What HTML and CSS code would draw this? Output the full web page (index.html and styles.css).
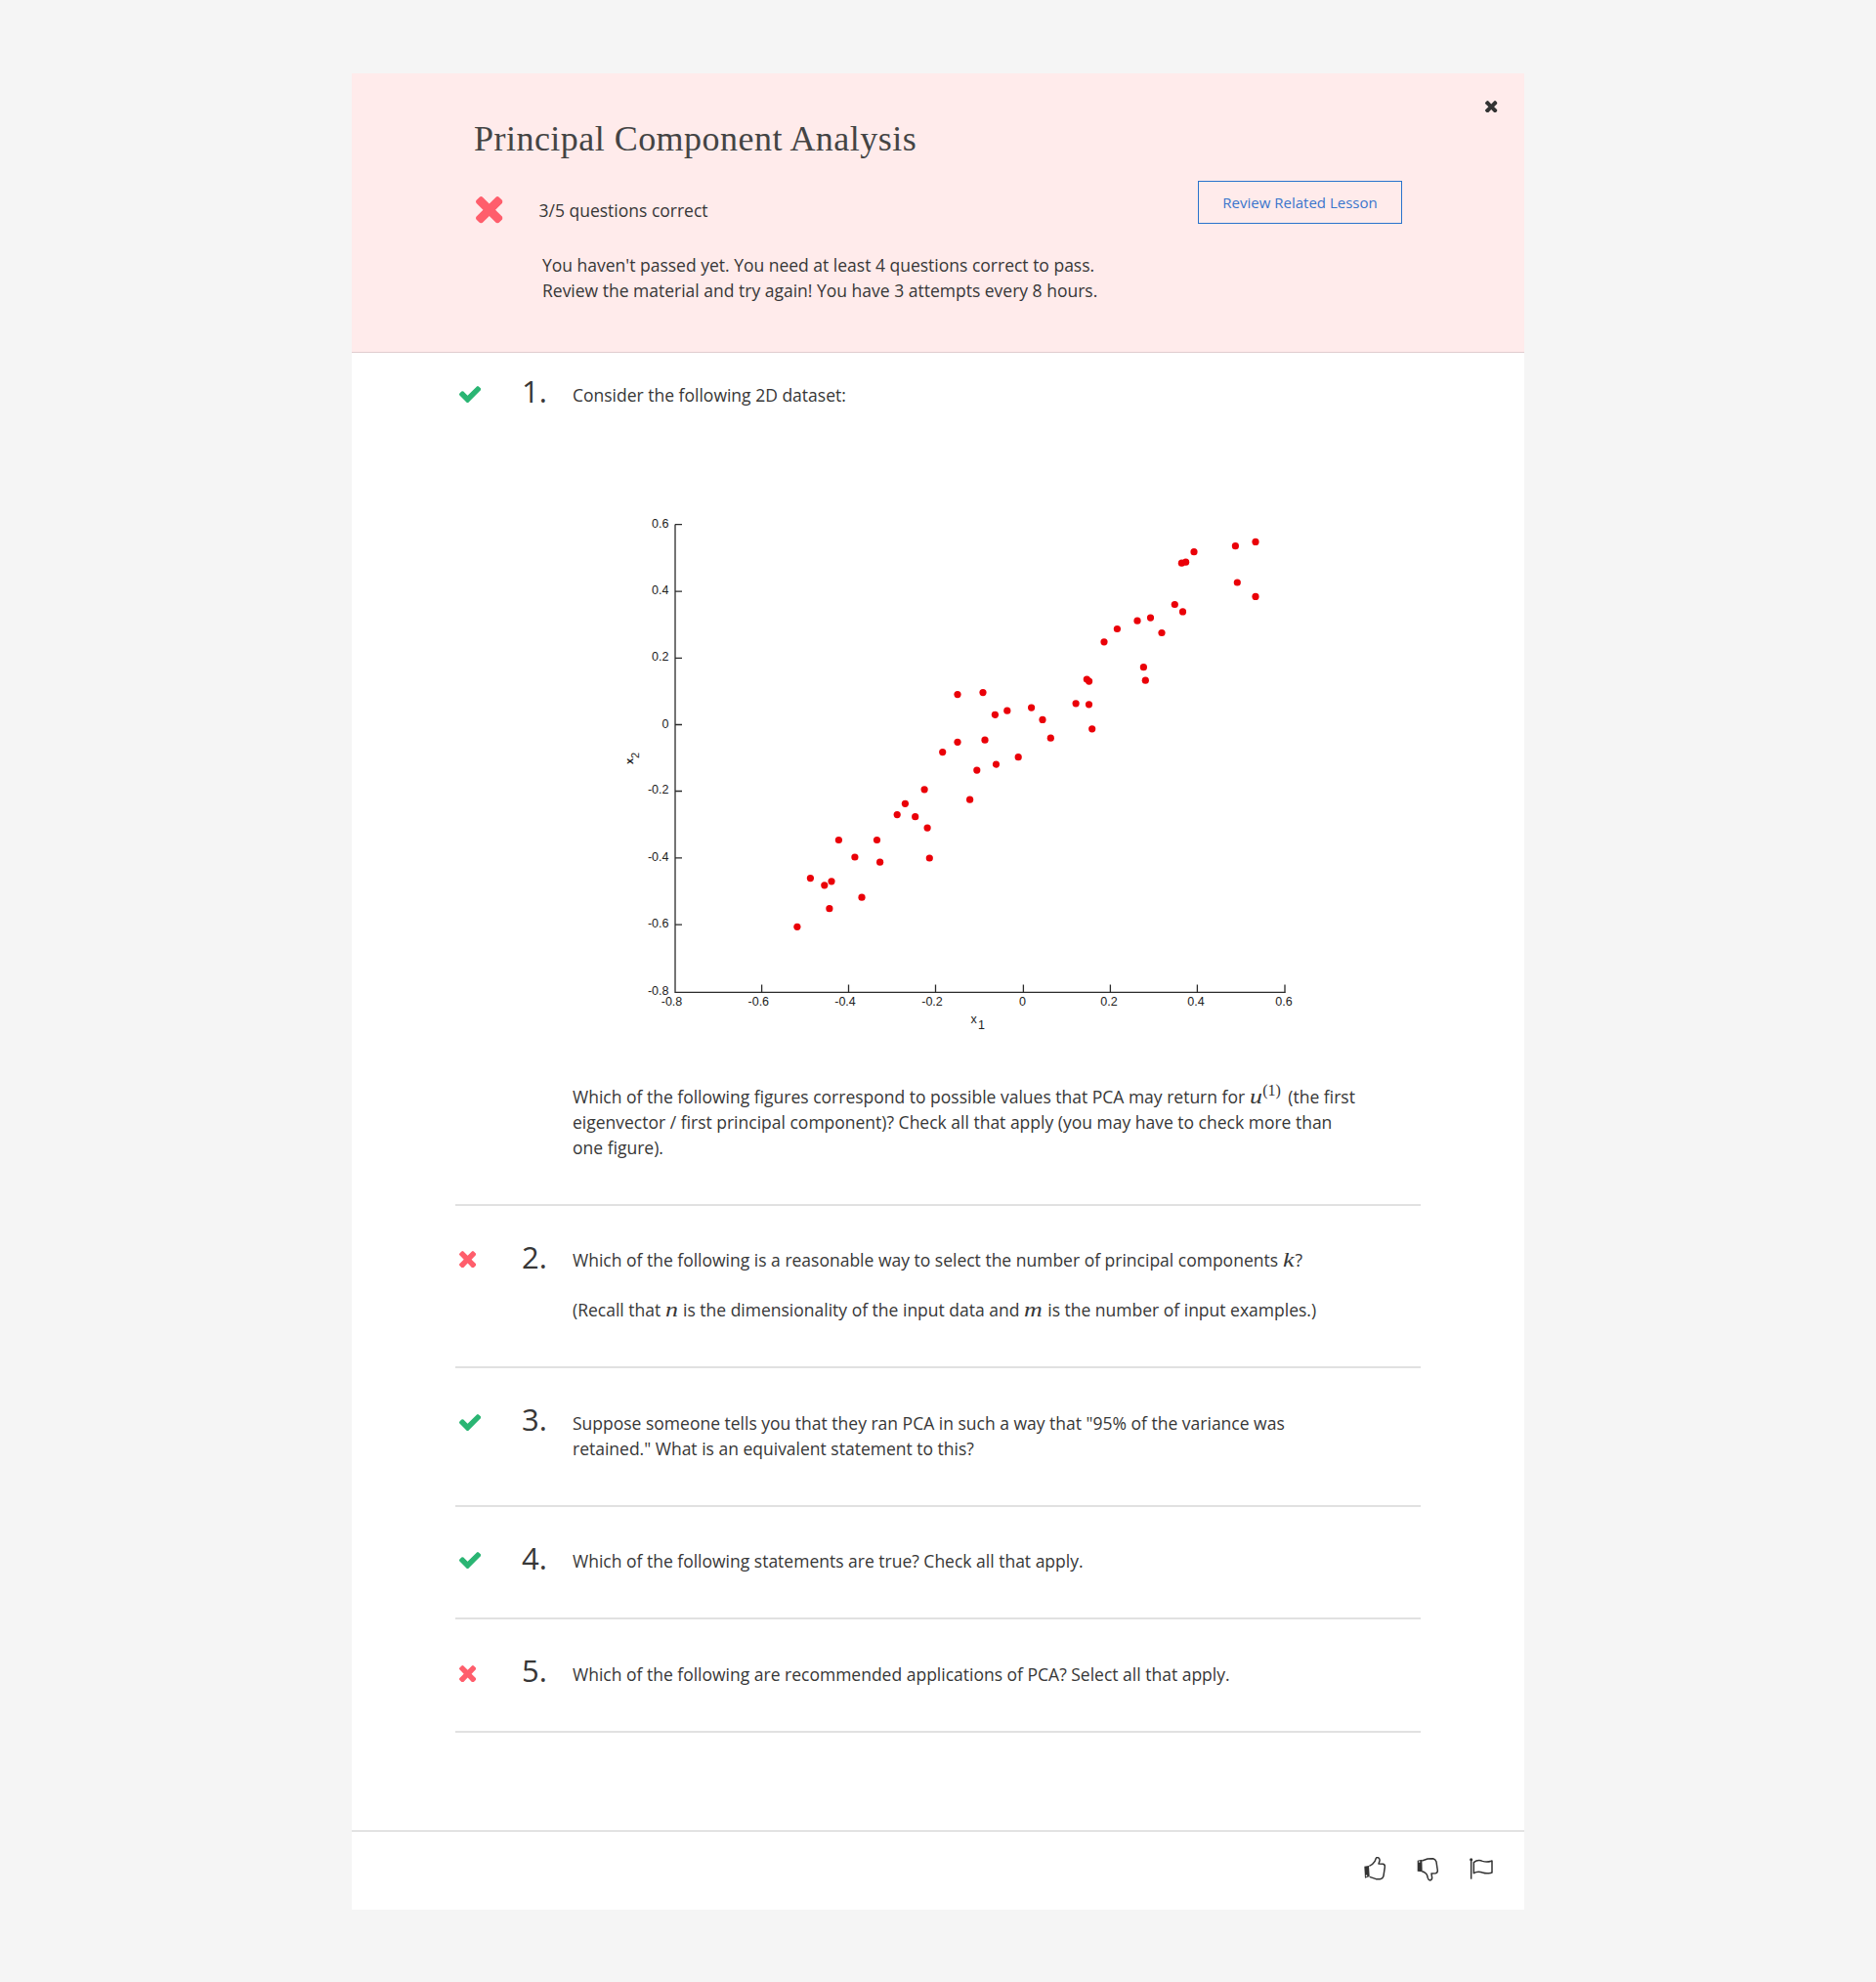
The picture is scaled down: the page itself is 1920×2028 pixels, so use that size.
FILE: index.html
```html
<!DOCTYPE html>
<html lang="en">
<head>
<meta charset="utf-8">
<title>Principal Component Analysis</title>
<link rel="stylesheet" href="styles.css">
</head>
<body>
<svg class="defs" width="0" height="0" aria-hidden="true">
  <symbol id="check" viewBox="121 334 1550 1188"><path d="M1671 566q0 40-28 68l-724 724-136 136q-28 28-68 28t-68-28l-136-136-362-362q-28-28-28-68t28-68l136-136q28-28 68-28t68 28l294 295 656-657q28-28 68-28t68 28l136 136q28 28 28 68z"/></symbol>
  <symbol id="times" viewBox="302 366 1188 1188"><path d="M1490 1322q0 40-28 68l-136 136q-28 28-68 28t-68-28l-294-294-294 294q-28 28-68 28t-68-28l-136-136q-28-28-28-68t28-68l294-294-294-294q-28-28-28-68t28-68l136-136q28-28 68-28t68 28l294 294 294-294q28-28 68-28t68 28l136 136q28 28 28 68t-28 68l-294 294 294 294q28 28 28 68z"/></symbol>
</svg>
<main class="card">
  <header class="result">
    <div class="summary">
      <h1 class="title">Principal Component Analysis</h1>
      <div class="score">
        <svg class="score-icon"><use href="#times"/></svg>
        <span>3/5 questions correct</span>
      </div>
      <p class="message">You haven't passed yet. You need at least 4 questions correct to pass.<br>Review the material and try again! You have 3 attempts every 8 hours.</p>
    </div>
    <a class="review">Review Related Lesson</a>
    <svg class="close"><use href="#times"/></svg>
  </header>

  <ol class="questions">
    <li class="question">
      <div class="mark"><svg class="check"><use href="#check"/></svg></div>
      <div class="number">1.</div>
      <div class="body">
        <p>Consider the following 2D dataset:</p>
        <svg class="plot" viewBox="586 417 804 692">
          <g class="axes">
            <path d="M691 536.5V1015.3H1315.3"/>
            <path d="M691 536.7h7M691 605.2h7M691 673.3h7M691 741.5h7M691 809.5h7M691 877.8h7M691 946.2h7"/>
            <path d="M779.6 1015v-7.5M868.5 1015v-7.5M957.5 1015v-7.5M1047.4 1015v-7.5M1136.4 1015v-7.5M1225.4 1015v-7.5M1315 1015.9v-8.4"/>
          </g>
          <g class="ticks ticks-y">
            <text x="684.5" y="539.8">0.6</text><text x="684.5" y="608">0.4</text><text x="684.5" y="676.3">0.2</text><text x="684.5" y="744.5">0</text>
            <text x="684.5" y="812.3">-0.2</text><text x="684.5" y="880.7">-0.4</text><text x="684.5" y="949">-0.6</text><text x="684.5" y="1018">-0.8</text>
          </g>
          <g class="ticks ticks-x">
            <text x="687.5" y="1029.3">-0.8</text><text x="776.3" y="1029.3">-0.6</text><text x="865" y="1029.3">-0.4</text><text x="954" y="1029.3">-0.2</text>
            <text x="1046.5" y="1029.3">0</text><text x="1135" y="1029.3">0.2</text><text x="1224" y="1029.3">0.4</text><text x="1314" y="1029.3">0.6</text>
          </g>
          <g class="ticks">
            <text x="993.5" y="1047">x</text><text x="1001" y="1053">1</text>
            <g transform="translate(647.5 782) rotate(-90)"><text class="axis-name" x="0" y="0">x</text><text class="axis-index" x="6" y="6">2</text></g>
          </g>
          <g class="points">
            <circle cx="980" cy="710.6" r="3.6"/><circle cx="980" cy="759.3" r="3.6"/><circle cx="964.7" cy="769.6" r="3.6"/>
            <circle cx="1264.4" cy="558.7" r="3.6"/><circle cx="1285" cy="554.4" r="3.6"/><circle cx="1222" cy="564.7" r="3.6"/>
            <circle cx="1209.4" cy="576.2" r="3.6"/><circle cx="1213.6" cy="575.2" r="3.6"/><circle cx="1266.3" cy="596" r="3.6"/>
            <circle cx="1285" cy="610.4" r="3.6"/><circle cx="1202.3" cy="618.5" r="3.6"/><circle cx="1210.5" cy="625.9" r="3.6"/>
            <circle cx="1177.5" cy="632.1" r="3.6"/><circle cx="1164" cy="635.2" r="3.6"/><circle cx="1189" cy="647.5" r="3.6"/>
            <circle cx="1143.4" cy="643.5" r="3.6"/><circle cx="1130" cy="656.8" r="3.6"/><circle cx="1170.4" cy="682.7" r="3.6"/>
            <circle cx="1172.3" cy="696.2" r="3.6"/><circle cx="1112.3" cy="695" r="3.6"/><circle cx="1114.6" cy="697.1" r="3.6"/>
            <circle cx="1101.1" cy="719.8" r="3.6"/><circle cx="1114.5" cy="720.8" r="3.6"/><circle cx="1117.7" cy="745.8" r="3.6"/>
            <circle cx="1006" cy="708.6" r="3.6"/><circle cx="1018.4" cy="731.3" r="3.6"/><circle cx="1030.8" cy="727.2" r="3.6"/>
            <circle cx="1055.6" cy="724.1" r="3.6"/><circle cx="1067" cy="736.4" r="3.6"/><circle cx="1075.3" cy="755.2" r="3.6"/>
            <circle cx="1008" cy="757.2" r="3.6"/><circle cx="1042.2" cy="774.7" r="3.6"/><circle cx="1019.4" cy="782.1" r="3.6"/>
            <circle cx="999.8" cy="788.1" r="3.6"/><circle cx="992.6" cy="818.2" r="3.6"/><circle cx="946.1" cy="807.8" r="3.6"/>
            <circle cx="926.4" cy="822.3" r="3.6"/><circle cx="918.2" cy="833.6" r="3.6"/><circle cx="936.7" cy="835.7" r="3.6"/>
            <circle cx="949.1" cy="847.1" r="3.6"/><circle cx="858.4" cy="859.5" r="3.6"/><circle cx="897.5" cy="859.5" r="3.6"/>
            <circle cx="874.9" cy="877" r="3.6"/><circle cx="900.6" cy="882.2" r="3.6"/><circle cx="951.3" cy="878" r="3.6"/>
            <circle cx="829.4" cy="898.6" r="3.6"/><circle cx="843.8" cy="905.8" r="3.6"/><circle cx="851" cy="901.8" r="3.6"/>
            <circle cx="882" cy="918.2" r="3.6"/><circle cx="848.9" cy="929.7" r="3.6"/><circle cx="815.9" cy="948.3" r="3.6"/>
          </g>
        </svg>
        <p>Which of the following figures correspond to possible values that PCA may return for <i class="math math-u">u</i><span class="sup">(1)</span> (the first<br>eigenvector / first principal component)? Check all that apply (you may have to check more than<br>one figure).</p>
      </div>
    </li>
    <li class="question">
      <div class="mark"><svg class="times"><use href="#times"/></svg></div>
      <div class="number">2.</div>
      <div class="body spaced">
        <p>Which of the following is a reasonable way to select the number of principal components <i class="math math-k">k</i>?</p>
        <p>(Recall that <i class="math math-n">n</i> is the dimensionality of the input data and <i class="math math-m">m</i> is the number of input examples.)</p>
      </div>
    </li>
    <li class="question">
      <div class="mark"><svg class="check"><use href="#check"/></svg></div>
      <div class="number">3.</div>
      <div class="body"><p>Suppose someone tells you that they ran PCA in such a way that "95% of the variance was<br>retained." What is an equivalent statement to this?</p></div>
    </li>
    <li class="question">
      <div class="mark"><svg class="check"><use href="#check"/></svg></div>
      <div class="number">4.</div>
      <div class="body"><p>Which of the following statements are true? Check all that apply.</p></div>
    </li>
    <li class="question">
      <div class="mark"><svg class="times"><use href="#times"/></svg></div>
      <div class="number">5.</div>
      <div class="body"><p>Which of the following are recommended applications of PCA? Select all that apply.</p></div>
    </li>
  </ol>

  <footer class="feedback">
    <svg class="icon-up" viewBox="0 0 66 72">
      <path class="solid" d="M1 29L15 27L17 60L3 65Z"/><circle class="hole" cx="7.500" cy="58" r="2.500"/>
      <path class="line" d="M16 28Q27 24 33 14L37 4Q40 0 45 3Q49 6 48 12L45 21L59 22Q65 24 64 31L60 58Q58 67 49 68L37 68L17 61"/>
    </svg>
    <svg class="icon-down" viewBox="0 0 66 72">
      <path class="solid" d="M2 8L16 5L17 43L2 41Z"/><circle class="hole" cx="8" cy="12" r="2.500"/>
      <path class="line" d="M16 9L33 3L49 2Q57 3 60 12L64 39Q64 46 58 47L45 48L47 61Q47 68 41 69Q36 69 34 62L32 54Q29 45 16 41"/>
    </svg>
    <svg class="icon-flag" viewBox="0 0 72 66">
      <circle class="solid" cx="5" cy="5" r="4.500"/><path class="line" d="M5 5V65"/>
      <path class="line" d="M13 14Q25 4 40 10Q54 15 69 9V45Q54 50 40 45Q25 39 13 47Z"/>
    </svg>
  </footer>
</main>
</body>
</html>
```
FILE: styles.css
```css
* { box-sizing: border-box; }
body {
  margin: 0;
  padding: 75px 0 74px;
  background: #f5f5f5;
  color: #373737;
  font: 17.5px/26px "Open Sans", sans-serif;
}
p, h1, ol { margin: 0; padding: 0; }
svg { display: block; }
.defs { position: absolute; }

.card { width: 1200px; margin: 0 auto; background: #fff; }

.result {
  position: relative;
  display: flex;
  justify-content: space-between;
  align-items: flex-start;
  height: 286px;
  padding: 47px 125px 0 125px;
  background: #ffebeb;
  border-bottom: 1px solid #e0cccf;
}
.title {
  color: #444;
  font: 400 36px/40px "Liberation Serif", serif;
  letter-spacing: .47px;
}
.score { display: flex; align-items: flex-start; gap: 37px; margin-top: 39px; padding-left: 2px; }
.score span { padding-top: 1px; }
.score-icon { width: 27.5px; height: 27.5px; fill: #ff5e6c; }
.message { margin: 29px 0 0 70px; }
.review {
  width: 209px;
  height: 44px;
  margin-top: 63px;
  border: 1px solid #2a73cc;
  color: #3a75cc;
  font-size: 15px;
  line-height: 42px;
  text-align: center;
}
.close { position: absolute; top: 27.5px; right: 27.5px; width: 12.5px; height: 12.5px; fill: #333; }

.questions { height: 1512px; padding: 0 106px; list-style: none; }
.question { display: flex; align-items: flex-start; padding: 42px 0 45px; border-bottom: 2px solid #e1e1e1; }
.question:nth-child(odd) { padding-top: 43px; }
.question:first-child { padding-top: 30px; }
.mark { width: 68px; padding: 4px 0 0 4px; }
.check { width: 22.3px; height: 17.1px; fill: #2ab573; }
.times { width: 17.3px; height: 17.3px; fill: #ff5e6c; }
.number { width: 52px; font-size: 31px; line-height: 19px; }
.question:nth-child(even) .number { line-height: 21px; }
.body { flex: 1; white-space: nowrap; }
.spaced { display: flex; flex-direction: column; gap: 25px; }

.math, .sup { font-family: "Liberation Serif", serif; line-height: 0; }
.math {
  display: inline-block;
  font-size: 22px;
  transform: scaleX(1.18);
  transform-origin: left;
}
.math-u { width: 13.5px; }
.math-k { width: 13px; }
.math-n { width: 13.7px; }
.math-m { width: 19.7px; }
.sup { position: relative; top: -8px; margin-right: 3px; font-size: 16px; }

.plot { width: 804px; height: 692px; }
.axes { fill: none; stroke: #2b2b2b; stroke-width: 1.3; }
.ticks { font: 12.5px "Liberation Sans", sans-serif; fill: #222; }
.ticks-y { text-anchor: end; }
.ticks-x { text-anchor: middle; }
.axis-name { font-size: 11px; font-weight: 700; }
.axis-index { font-size: 11px; }
.points { fill: #ea0008; }

.feedback {
  display: flex;
  justify-content: flex-end;
  gap: 32px;
  height: 81px;
  padding: 26px 32px 0 0;
  border-top: 1px solid #ccc;
}
.icon-up, .icon-down { width: 22px; height: 24px; }
.icon-down { margin-top: 1px; }
.icon-flag { width: 24px; height: 22px; margin-top: 1px; }
.solid { fill: #333; }
.hole { fill: #fff; }
.line { fill: none; stroke: #333; stroke-width: 4.5; stroke-linejoin: round; }
```
